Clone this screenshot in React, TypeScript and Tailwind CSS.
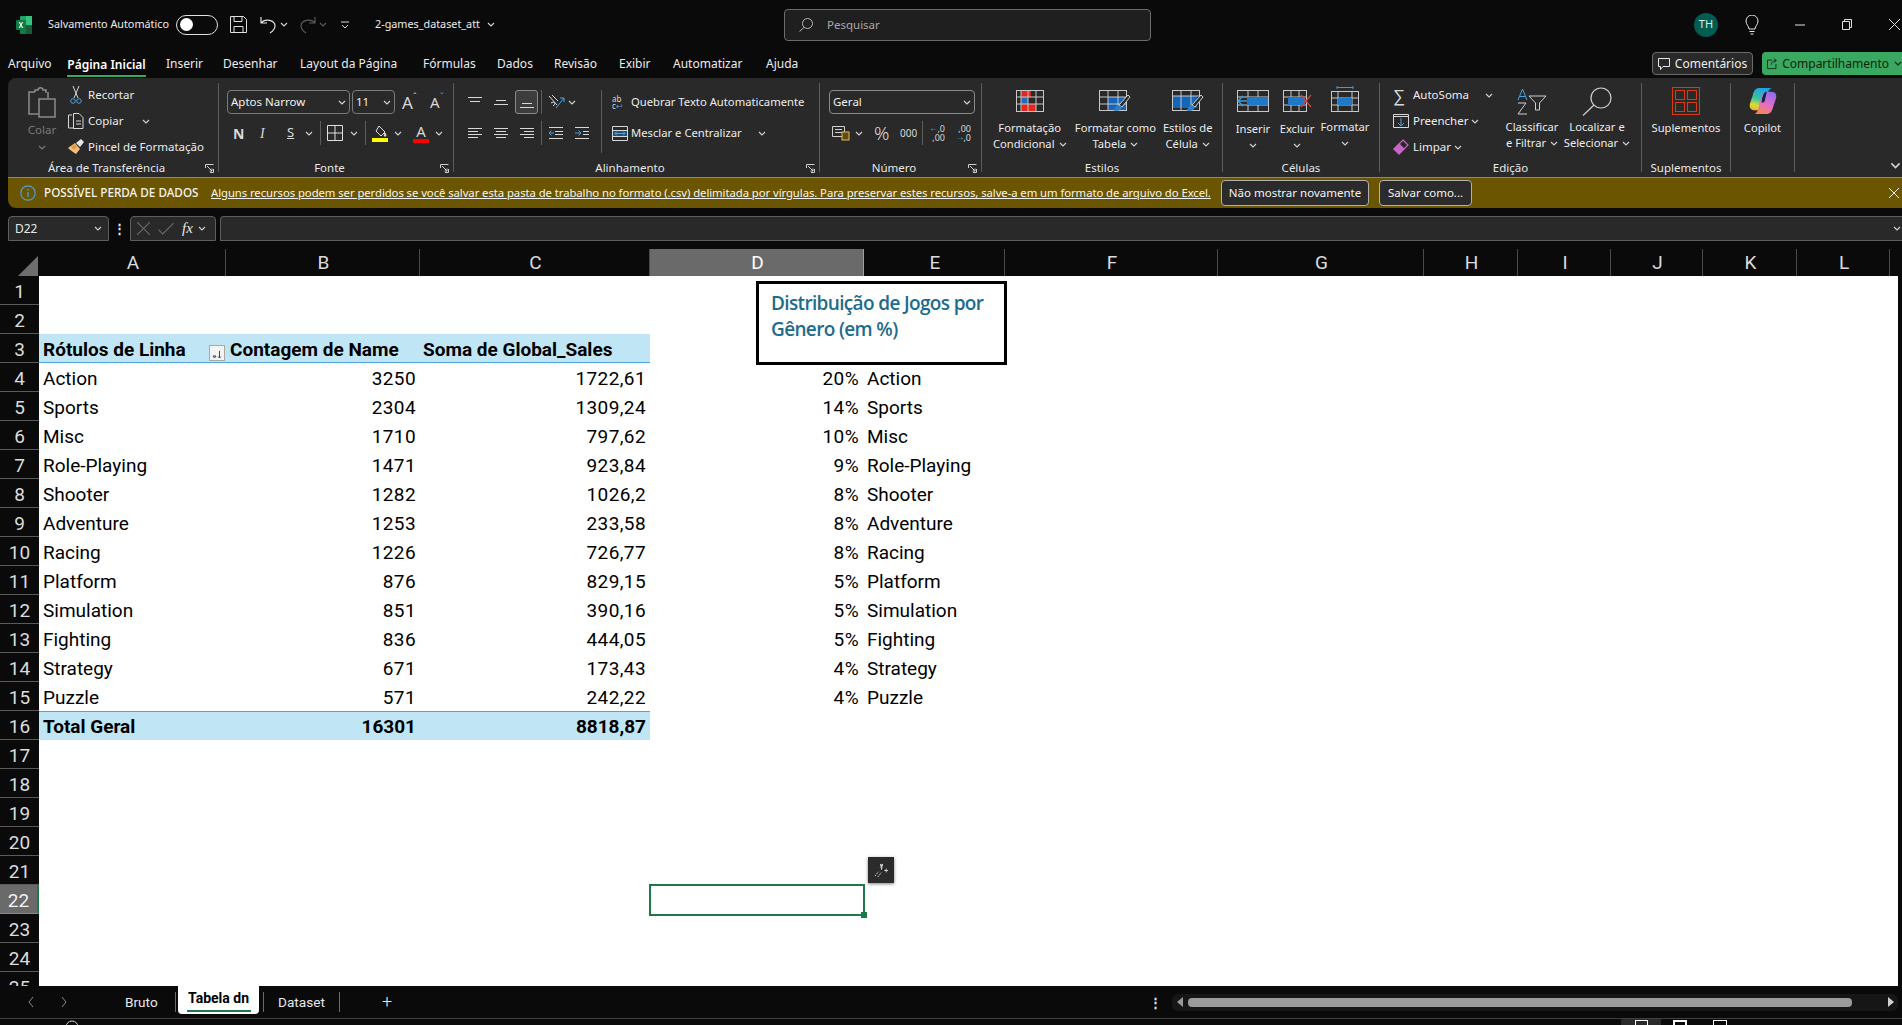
import React from "react";

const Chevron = ({ className = "", color = "#d0d0d0" }: { className?: string; color?: string }) => (
  <svg viewBox="0 0 8 5" className={`w-[8px] h-[5px] shrink-0 ${className}`} fill="none" stroke={color} strokeWidth="1.2">
    <path d="M1 1l3 3 3-3" />
  </svg>
);

const GridBase = ({ w, h, cols, rows }: { w: number; h: number; cols: number[]; rows: number[] }) => (
  <>
    <rect x=".5" y=".5" width={w - 1} height={h - 1} fill="none" stroke="#c8c8c8" />
    {cols.map((c) => (
      <path key={`c${c}`} d={`M${c} 0V${h}`} stroke="#c8c8c8" />
    ))}
    {rows.map((r) => (
      <path key={`r${r}`} d={`M0 ${r}H${w}`} stroke="#c8c8c8" />
    ))}
  </>
);

const Brush = ({ x, y }: { x: number; y: number }) => (
  <g transform={`translate(${x} ${y})`}>
    <path d="M15 0l2 2-8 10-3-2z" fill="#2a2a2a" stroke="#cfcfcf" />
    <path d="M5 10c-3 1-2 4-5 5 3 2 8 1 9-3z" fill="#2f7fc4" />
  </g>
);

const ExcelLogo = () => (
  <svg viewBox="0 0 16 18" className="w-[16px] h-[18px]">
    <rect x="4" y="0" width="12" height="18" rx="1" fill="#21a366" />
    <rect x="10" y="0" width="6" height="9" fill="#33c481" />
    <rect x="4" y="9" width="6" height="9" fill="#107c41" />
    <rect x="10" y="9" width="6" height="9" fill="#185c37" />
    <rect x="0" y="4" width="10" height="10" rx="1" fill="#107c41" />
    <path d="M2.6 6l1.7 3-1.8 3h1.3l1.1-2.1L6 12h1.4L5.500 9l1.800-3H6L5 8 3.900 6z" fill="#fff" />
  </svg>
);

const Copilot = () => (
  <svg viewBox="0 0 30 30" className="w-[30px] h-[28px]">
    <defs>
      <linearGradient id="cpa" x1="0.6" y1="0" x2="0.3" y2="1">
        <stop offset="0" stopColor="#1fa2e8" />
        <stop offset="0.5" stopColor="#36c2a0" />
        <stop offset="0.8" stopColor="#d8dc3a" />
        <stop offset="1" stopColor="#f5b52c" />
      </linearGradient>
      <linearGradient id="cpb" x1="0.7" y1="0" x2="0.3" y2="1">
        <stop offset="0" stopColor="#8f6cf0" />
        <stop offset="0.55" stopColor="#e66cc4" />
        <stop offset="1" stopColor="#f58a4a" />
      </linearGradient>
    </defs>
    <path d="M10 1C6 2 5 5 4 9L1 18c-1 4 1 7 5 7h5c3 0 5-2 6-6l3-12c1-3 2-6 5-6z" fill="url(#cpa)" />
    <path d="M20 29c4-1 5-4 6-8l3-9c1-4-1-7-5-7h-5c-3 0-5 2-6 6l-3 12c-1 3-2 6-5 6z" fill="url(#cpb)" />
    <path d="M14 12l2-5c.6-1.500 2-2 3-2l-1.500 7-1 4-3 1z" fill="#15233f" />
  </svg>
);

interface GroupProps {
  width: string;
  label?: string;
  launcher?: boolean;
  children: React.ReactNode;
}

const Launcher = () => (
  <svg viewBox="0 0 9 9" className="w-[9px] h-[9px] mr-[4px] shrink-0" fill="none" stroke="#cfcfcf">
    <path d="M8.500 5v3.500H5M.5 4V.5h8M2 2l5 5M7 4.500V7H4.500" />
  </svg>
);

const Group = ({ width, label, launcher, children }: GroupProps) => (
  <div className={`${width} h-[89px] shrink-0 border-r border-[#5c5c5c] flex flex-col`}>
    <div className="h-[78px] shrink-0">{children}</div>
    <div className="h-[14px] shrink-0 flex items-center text-[11.5px] text-[#e8e8e8]">
      <div className="flex-1 text-center whitespace-nowrap">{label}</div>
      {launcher && <Launcher />}
    </div>
  </div>
);

const BigLabel = ({ lines, chev }: { lines: string[]; chev?: boolean }) => (
  <div className="text-[11.2px] leading-[16px] text-center text-[#ececec] whitespace-nowrap">
    <div>{lines[0]}</div>
    <div className="flex items-center justify-center gap-[4px] h-[16px]">
      {lines[1] && <span>{lines[1]}</span>}
      {chev && <Chevron />}
    </div>
  </div>
);

const Lines = ({ ys }: { ys: number[][] }) => (
  <svg viewBox="0 0 14 14" className="w-[14px] h-[14px]" stroke="#d8d8d8" fill="none">
    {ys.map((l, i) => (
      <path key={i} d={`M${l[1]} ${l[0]}.5H${l[2]}`} />
    ))}
  </svg>
);

const Clipboard = () => (
  <svg viewBox="0 0 28 32" className="w-[28px] h-[32px]" fill="none" stroke="#8c8c8c" strokeWidth="1.500">
    <path d="M7 6H1v22h9" />
    <path d="M7 6V4h3c0-3 5-3 5 0h3v2h-1" />
    <path d="M20 6v6" />
    <rect x="11" y="13" width="16" height="18" fill="#2a2a2a" />
  </svg>
);

const Scissors = () => (
  <svg viewBox="0 0 12 18" className="w-[12px] h-[18px]" fill="none">
    <path d="M3 0l5 12M9 0L4 12" stroke="#d8d8d8" />
    <circle cx="3" cy="15" r="2.300" stroke="#4aa3e0" />
    <circle cx="9" cy="15" r="2.300" stroke="#4aa3e0" />
  </svg>
);

const CopyIcon = () => (
  <svg viewBox="0 0 16 18" className="w-[16px] h-[18px]" fill="none" stroke="#d8d8d8">
    <path d="M4 3H.5v13H6" />
    <path d="M5.500 1.500H11l4 4v11H5.500z" />
    <path d="M8 9h5M8 12h5" />
  </svg>
);

const PainterIcon = () => (
  <svg viewBox="0 0 16 16" className="w-[16px] h-[16px]">
    <path d="M0 9l7-5 5 6-4 5C5 13 2 11 0 9z" fill="#f2c084" />
    <path d="M3 8l4-3 2 3-3 3z" fill="#e59a3b" />
    <path d="M8 4l5-4 3 3-4 5z" fill="#e8e8e8" />
  </svg>
);

const rowBtn = "flex items-center h-[26px] text-[11.5px] text-[#ececec] whitespace-nowrap";

const Ribbon = () => (
  <div className="h-[99px] ml-[8px] bg-[#292929] rounded-tl-[8px] pt-[5px] flex">
    <Group width="w-[211px]" label="Área de Transferência" launcher>
      <div className="flex">
        <div className="w-[60px] pl-[14px] pr-[6px] pt-[3px] flex flex-col items-center">
          <Clipboard />
          <div className="mt-[3px] text-[11.5px] text-[#7a7a7a]">Colar</div>
          <Chevron className="mt-[7px]" color="#7a7a7a" />
        </div>
        <div className="-mt-[1px]">
          <div className={rowBtn}>
            <div className="w-[20px] flex justify-center pr-[4px]"><Scissors /></div>
            Recortar
          </div>
          <div className={rowBtn}>
            <div className="w-[20px]"><CopyIcon /></div>
            Copiar
            <Chevron className="ml-[19px]" />
          </div>
          <div className={rowBtn}>
            <div className="w-[20px]"><PainterIcon /></div>
            Pincel de Formatação
          </div>
        </div>
      </div>
    </Group>

    <Group width="w-[235px]" label="Fonte" launcher>
      <div className="pt-[7px]">
        <div className="flex items-center h-[24px]">
          <div className="ml-[8px] w-[123px] h-[24px] rounded-[4px] border border-[#7a7a7a] flex items-center justify-between pl-[3px] pr-[3px] text-[11.5px] text-[#f0f0f0]">
            Aptos Narrow <Chevron />
          </div>
          <div className="ml-[2px] w-[43px] h-[24px] rounded-[4px] border border-[#7a7a7a] flex items-center justify-between pl-[3px] pr-[3px] text-[11.5px] text-[#f0f0f0]">
            11 <Chevron />
          </div>
          <div className="ml-[7px] w-[16px] text-[17px] leading-none text-[#d8d8d8] relative">
            A<span className="absolute -top-[2px] left-[11px] text-[9px] text-[#c0c0c0]">ˆ</span>
          </div>
          <div className="ml-[12px] w-[15px] text-[15px] leading-none text-[#d8d8d8] relative">
            A<span className="absolute -top-[3px] left-[10px] text-[9px] text-[#5aa6e0]">ˇ</span>
          </div>
        </div>
        <div className="flex items-center h-[24px] mt-[7px] text-[#d8d8d8]">
          <div className="ml-[14px] w-[11px] text-[14px] font-bold">N</div>
          <div className="ml-[16px] w-[10px] text-[14px] italic font-['Liberation_Serif',serif]">I</div>
          <div className="ml-[17px] w-[10px] text-[13px] underline">S</div>
          <Chevron className="ml-[8px]" />
          <div className="ml-[7px] w-px h-[24px] bg-[#5c5c5c]" />
          <svg viewBox="0 0 16 16" className="ml-[6px] w-[16px] h-[16px]" fill="none" stroke="#e0e0e0">
            <path d="M.5.5h15v15H.5zM8 0v16M0 8h16" />
          </svg>
          <Chevron className="ml-[7px]" />
          <div className="ml-[7px] w-px h-[24px] bg-[#5c5c5c]" />
          <div className="ml-[6px] w-[16px] flex flex-col items-center">
            <svg viewBox="0 0 14 13" className="w-[14px] h-[13px]" fill="none" stroke="#e0e0e0">
              <path d="M6 1l6 6-4 4-5-5z" />
              <path d="M12 8c1 1.500 1.500 3 0 3.500-1-.5-1-2 0-3.500z" fill="#f4d03f" />
            </svg>
            <div className="w-[16px] h-[4px] bg-[#ffff00]" />
          </div>
          <Chevron className="ml-[6px]" />
          <div className="ml-[11px] w-[16px] flex flex-col items-center">
            <div className="text-[15px] leading-[14px]">A</div>
            <div className="w-[16px] h-[4px] bg-[#ff0000] mt-[1px]" />
          </div>
          <Chevron className="ml-[6px]" />
        </div>
      </div>
    </Group>

    <Group width="w-[366px]" label="Alinhamento" launcher>
      <div className="pt-[7px] flex">
        <div>
          <div className="flex items-center h-[24px]">
            <div className="ml-[14px]"><Lines ys={[[2, 0, 14], [6, 2, 12]]} /></div>
            <div className="ml-[12px]"><Lines ys={[[5, 2, 12], [9, 0, 14]]} /></div>
            <div className="ml-[7px] w-[23px] h-[24px] rounded-[3px] border border-[#8a8a8a] bg-[#3d3d3d] flex items-center justify-center">
              <Lines ys={[[8, 2, 12], [12, 0, 14]]} />
            </div>
            <div className="ml-[3px] w-px h-[24px] bg-[#5c5c5c]" />
            <svg viewBox="0 0 17 16" className="ml-[6px] w-[17px] h-[16px]" fill="none" stroke="#d8d8d8">
              <path d="M1 2l8 9M4 1l6 6M3 9c3-2 6 0 2 3" />
              <path d="M8 14L16 4M12 4h4v4" stroke="#4aa3e0" />
            </svg>
            <Chevron className="ml-[3px]" />
          </div>
          <div className="flex items-center h-[24px] mt-[7px]">
            <div className="ml-[14px]"><Lines ys={[[2, 0, 14], [5, 0, 10], [8, 0, 14], [11, 0, 10]]} /></div>
            <div className="ml-[12px]"><Lines ys={[[2, 0, 14], [5, 2, 12], [8, 0, 14], [11, 2, 12]]} /></div>
            <div className="ml-[12px]"><Lines ys={[[2, 0, 14], [5, 4, 14], [8, 0, 14], [11, 4, 14]]} /></div>
            <div className="ml-[7px] w-px h-[24px] bg-[#5c5c5c]" />
            <svg viewBox="0 0 14 14" className="ml-[7px] w-[14px] h-[14px]" fill="none" stroke="#d8d8d8">
              <path d="M0 1.500h14M6 5.500h8M6 8.500h8M0 12.500h14" />
              <path d="M5 7H0M2.500 4.500L0 7l2.500 2.500" stroke="#4aa3e0" />
            </svg>
            <svg viewBox="0 0 14 14" className="ml-[12px] w-[14px] h-[14px]" fill="none" stroke="#d8d8d8">
              <path d="M0 1.500h14M8 5.500h6M8 8.500h6M0 12.500h14" />
              <path d="M0 7h6M3.500 4.500L6 7 3.500 9.500" stroke="#4aa3e0" />
            </svg>
          </div>
        </div>
        <div className="ml-[12px] w-px h-[63px] bg-[#5c5c5c]" />
        <div className="ml-[10px] text-[11.25px] text-[#ececec] whitespace-nowrap">
          <div className="flex items-center h-[24px]">
            <div className="w-[19px] text-[8px] leading-[7px] text-[#d8d8d8]">
              ab<br />c<span className="text-[#4aa3e0]">↩</span>
            </div>
            Quebrar Texto Automaticamente
          </div>
          <div className="flex items-center h-[24px] mt-[7px]">
            <svg viewBox="0 0 16 15" className="w-[16px] h-[15px] mr-[3px]" fill="none" stroke="#d8d8d8">
              <path d="M.5.5h15v14H.5zM0 4.500h16M0 10.500h16" />
              <rect x="1" y="5" width="14" height="5" fill="#1c4f7a" stroke="none" />
              <path d="M3 7.500h10M5 5.500l-2 2 2 2M11 5.500l2 2-2 2" stroke="#4aa3e0" />
            </svg>
            Mesclar e Centralizar
            <Chevron className="ml-[16px]" />
          </div>
        </div>
      </div>
    </Group>

    <Group width="w-[162px]" label="Número" launcher>
      <div className="pt-[7px]">
        <div className="ml-[9px] w-[146px] h-[24px] rounded-[4px] border border-[#8a8a8a] flex items-center justify-between pl-[3px] pr-[3px] text-[11.5px] text-[#f0f0f0]">
          Geral <Chevron />
        </div>
        <div className="flex items-center h-[24px] mt-[7px] text-[#d8d8d8]">
          <svg viewBox="0 0 18 16" className="ml-[12px] w-[18px] h-[16px]" fill="none" stroke="#d0d0d0">
            <path d="M.5 1.500h12v10H.5zM3 4.500h7M3 7.500h7" />
            <rect x="10" y="7" width="7" height="8" fill="#5a4a1e" stroke="#e8b84a" />
          </svg>
          <Chevron className="ml-[5px]" />
          <div className="ml-[11px] text-[19px] leading-none font-light w-[17px]">%</div>
          <div className="ml-[9px] text-[10px] w-[17px]">000</div>
          <div className="ml-[5px] w-px h-[24px] bg-[#5c5c5c]" />
          <div className="ml-[6px] w-[16px] text-[9px] leading-[9px] text-right relative">
            ,0<br />,00
            <span className="absolute left-0 -top-[1px] text-[10px] text-[#4aa3e0]">←</span>
          </div>
          <div className="ml-[10px] w-[16px] text-[9px] leading-[9px] text-right relative">
            ,00<br />,0
            <span className="absolute left-0 top-[8px] text-[10px] text-[#4aa3e0]">→</span>
          </div>
        </div>
      </div>
    </Group>

    <Group width="w-[241px]" label="Estilos">
      <div className="flex pt-[7px]">
        <div className="w-[96px] flex flex-col items-center">
          <svg viewBox="0 0 28 22" className="w-[28px] h-[22px]">
            <rect x="5" y="0" width="10" height="7" fill="#e3271f" />
            <rect x="5" y="7" width="7" height="7" fill="#1f6fc0" />
            <rect x="5" y="14" width="15" height="8" fill="#e3271f" />
            <GridBase w={28} h={22} cols={[5, 12, 20]} rows={[7, 14]} />
          </svg>
          <div className="mt-[8px]"><BigLabel lines={["Formatação", "Condicional"]} chev /></div>
        </div>
        <div className="w-[76px] flex flex-col items-center">
          <svg viewBox="0 0 32 27" className="w-[32px] h-[27px] -mb-[5px]">
            <rect x="9" y="7" width="19" height="14" fill="#1565b8" />
            <GridBase w={28} h={21} cols={[9, 19]} rows={[7, 14]} />
            <Brush x={14} y={5} />
          </svg>
          <div className="mt-[8px]"><BigLabel lines={["Formatar como", "Tabela"]} chev /></div>
        </div>
        <div className="w-[69px] flex flex-col items-center">
          <svg viewBox="0 0 32 27" className="w-[32px] h-[27px] -mb-[5px]">
            <rect x="1" y="6" width="24" height="12" fill="#1565b8" />
            <GridBase w={28} h={21} cols={[9, 19]} rows={[6]} />
            <Brush x={14} y={5} />
          </svg>
          <div className="mt-[8px]"><BigLabel lines={["Estilos de", "Célula"]} chev /></div>
        </div>
      </div>
    </Group>

    <Group width="w-[157px]" label="Células">
      <div className="flex pt-[3px]">
        <div className="w-[60px] flex flex-col items-center">
          <svg viewBox="0 0 32 22" className="mt-[4px] w-[32px] h-[22px]">
            <GridBase w={32} h={22} cols={[11, 21]} rows={[7, 15]} />
            <rect x="10" y="7" width="21" height="8" fill="#1f78c8" />
            <path d="M10 11H1M6 6l-5 5 5 5" stroke="#3a9be0" strokeWidth="1.500" fill="none" />
          </svg>
          <div className="mt-[9px]"><BigLabel lines={["Inserir", ""]} chev /></div>
        </div>
        <div className="w-[28px] flex flex-col items-center">
          <svg viewBox="0 0 29 22" className="mt-[4px] w-[29px] h-[22px] shrink-0">
            <GridBase w={24} h={22} cols={[8, 16]} rows={[7, 15]} />
            <rect x="5" y="7" width="17" height="8" fill="#1f78c8" />
            <path d="M18 5l10 12M28 5L18 17" stroke="#d9413a" strokeWidth="1.200" />
          </svg>
          <div className="mt-[9px]"><BigLabel lines={["Excluir", ""]} chev /></div>
        </div>
        <div className="w-[68px] flex flex-col items-center">
          <svg viewBox="0 0 28 26" className="w-[28px] h-[26px]">
            <path d="M6 1.500h16M6 0v3M22 0v3" stroke="#3a9be0" />
            <g transform="translate(0 5)">
              <GridBase w={28} h={21} cols={[7, 21]} rows={[7, 14]} />
              <rect x="7" y="7" width="14" height="7" fill="#1f78c8" />
            </g>
          </svg>
          <div className="mt-[7px]"><BigLabel lines={["Formatar", ""]} chev /></div>
        </div>
      </div>
    </Group>

    <Group width="w-[262px]" label="Edição">
      <div className="flex">
        <div className="-mt-[1px] pl-[13px] w-[122px]">
          <div className={rowBtn}>
            <div className="w-[20px] text-[17px] leading-none font-light text-[#d8d8d8]">∑</div>
            AutoSoma
            <Chevron className="ml-[16px]" />
          </div>
          <div className={rowBtn}>
            <svg viewBox="0 0 16 16" className="w-[16px] h-[16px] mr-[4px]" fill="none" stroke="#d8d8d8">
              <path d="M.5 1.500h15v13H.5zM0 3.500h16" />
              <path d="M8 5v8M5 10l3 3 3-3" stroke="#4aa3e0" />
            </svg>
            Preencher
            <Chevron className="ml-[3px]" />
          </div>
          <div className={rowBtn}>
            <svg viewBox="0 0 16 16" className="w-[16px] h-[16px] mr-[4px]" fill="none" stroke="#c765c9" strokeWidth="1.200">
              <path d="M10 1l5 5-9 9-5-5z" />
              <path d="M6 5l5 5-5 5-5-5z" fill="#c765c9" />
            </svg>
            Limpar
            <Chevron className="ml-[3px]" />
          </div>
        </div>
        <div className="w-[60px] flex flex-col items-center pt-[5px]">
          <svg viewBox="0 0 30 27" className="w-[30px] h-[27px]" fill="none">
            <path d="M1 12L5.500 1 10 12M2.500 8.500h6" stroke="#4aa3e0" />
            <path d="M1 15h8L1 26h9" stroke="#d0d0d0" />
            <path d="M12 8h17l-6.500 7v7h-4v-7z" stroke="#d0d0d0" />
          </svg>
          <div className="mt-[4px]"><BigLabel lines={["Classificar", "e Filtrar"]} chev /></div>
        </div>
        <div className="w-[70px] flex flex-col items-center pt-[4px]">
          <svg viewBox="0 0 30 29" className="w-[30px] h-[29px]" fill="none" stroke="#d0d0d0" strokeWidth="1.200">
            <circle cx="19" cy="11" r="10" />
            <path d="M12 18L1 28.500" />
          </svg>
          <div className="mt-[3px]"><BigLabel lines={["Localizar e", "Selecionar"]} chev /></div>
        </div>
      </div>
    </Group>

    <Group width="w-[89px]" label="Suplementos">
      <div className="flex flex-col items-center pt-[4px]">
        <svg viewBox="0 0 28 28" className="w-[28px] h-[28px]" fill="none" stroke="#d83b12" strokeWidth="1.100">
          <path d="M.5.5h27v27H.5z" />
          <path d="M3.500 3.500h9v9h-9zM15.500 3.500h9v9h-9zM3.500 15.500h9v9h-9zM15.500 15.500h9v9h-9z" />
        </svg>
        <div className="mt-[5px]"><BigLabel lines={["Suplementos"]} /></div>
      </div>
    </Group>

    <Group width="w-[64px]">
      <div className="flex flex-col items-center pt-[4px]">
        <Copilot />
        <div className="mt-[5px]"><BigLabel lines={["Copilot"]} /></div>
      </div>
    </Group>

    <div className="flex-1 flex items-end justify-end pr-[1px] pb-[8px]">
      <Chevron className="w-[11px] h-[7px]" />
    </div>
  </div>
);

const Notice = () => (
  <div className="h-[31px] ml-[8px] bg-[#6b5500] border-t border-[#8a8a7a] rounded-bl-[8px] flex items-center text-[11.5px] text-[#f4f4f4] whitespace-nowrap">
    <svg viewBox="0 0 16 16" className="ml-[12px] w-[16px] h-[16px]" fill="none" stroke="#4aa3e0" strokeWidth="1.200">
      <circle cx="8" cy="8" r="7.200" />
      <path d="M8 7v5M8 4v1.500" />
    </svg>
    <span className="ml-[8px] w-[167px] font-medium text-[11.7px]">POSSÍVEL PERDA DE DADOS</span>
    <span className="w-[1010px] underline text-[11.35px] tracking-[-0.08px]">
      Alguns recursos podem ser perdidos se você salvar esta pasta de trabalho no formato (.csv) delimitada por vírgulas. Para preservar estes recursos, salve-a em um formato de arquivo do Excel.
    </span>
    <button className="w-[148px] h-[26px] rounded-[4px] border border-[#b0b0b0] bg-[#2b2b2b] text-[11.5px]">Não mostrar novamente</button>
    <button className="ml-[10px] w-[93px] h-[26px] rounded-[4px] border border-[#b0b0b0] bg-[#2b2b2b] text-[11.5px]">Salvar como...</button>
    <svg viewBox="0 0 10 10" className="ml-auto mr-[3px] w-[10px] h-[10px]" stroke="#f0f0f0" fill="none">
      <path d="M0 0l10 10M10 0L0 10" />
    </svg>
  </div>
);

const FormulaBar = () => (
  <div className="h-[25px] mt-[8px] ml-[8px] flex items-stretch text-[#e8e8e8]">
    <div className="w-[101px] rounded-t-[4px] border border-[#5e5e5e] bg-[#292929] flex items-center justify-between pl-[6px] pr-[6px] text-[12px]">
      D22 <Chevron />
    </div>
    <div className="w-[21px] flex items-center justify-center text-[13px] font-bold leading-none">⋮</div>
    <div className="w-[86px] rounded-t-[4px] border border-[#5e5e5e] bg-[#292929] flex items-center pl-[6px] gap-[8px]">
      <svg viewBox="0 0 12 12" className="w-[13px] h-[13px]" stroke="#6a6a6a" fill="none"><path d="M0 0l12 12M12 0L0 12" /></svg>
      <svg viewBox="0 0 14 12" className="w-[16px] h-[13px]" stroke="#6a6a6a" fill="none"><path d="M0 7l4 4L14 1" /></svg>
      <span className="text-[15px] italic font-['Liberation_Serif',serif]">fx</span>
      <Chevron className="-ml-[3px]" />
    </div>
    <div className="ml-[4px] flex-1 rounded-tl-[4px] border border-[#5e5e5e] border-r-0 bg-[#292929] flex items-center justify-end pr-[1px]">
      <Chevron />
    </div>
  </div>
);

const sheetGrid = "grid grid-cols-[39px_187px_194px_230px_214px_141px_213px_206px_94px_93px_92px_94px_93px_8px]";
const columns = ["A", "B", "C", "D", "E", "F", "G", "H", "I", "J", "K", "L"];

const pivot = [
  ["Action", "3250", "1722,61", "20%"],
  ["Sports", "2304", "1309,24", "14%"],
  ["Misc", "1710", "797,62", "10%"],
  ["Role-Playing", "1471", "923,84", "9%"],
  ["Shooter", "1282", "1026,2", "8%"],
  ["Adventure", "1253", "233,58", "8%"],
  ["Racing", "1226", "726,77", "8%"],
  ["Platform", "876", "829,15", "5%"],
  ["Simulation", "851", "390,16", "5%"],
  ["Fighting", "836", "444,05", "5%"],
  ["Strategy", "671", "173,43", "4%"],
  ["Puzzle", "571", "242,22", "4%"],
];

const RowHead = ({ n }: { n: number }) => (
  <div
    className={
      n === 22
        ? "h-[29px] bg-[#6a6a6a] border-r-2 border-[#1d7a48] border-b border-b-[#8a8a8a] text-center text-[#f0f0f0] leading-[32px]"
        : "h-[29px] bg-[#0a0a0a] border-b border-[#5a5a5a] text-center text-[#dcdcdc] leading-[32px]"
    }
  >
    {n}
  </div>
);

const Spare = () => <div className="col-span-10 h-[29px] bg-white" />;

const Row = ({ n }: { n: number }) => {
  const item = n >= 4 && n <= 15 ? pivot[n - 4] : null;
  if (item) {
    return (
      <div className={sheetGrid}>
        <RowHead n={n} />
        <div className="h-[29px] bg-white pl-[4px] text-black leading-[31px]">{item[0]}</div>
        <div className="h-[29px] bg-white pr-[4px] text-right text-black tracking-[0.4px] leading-[31px]">{item[1]}</div>
        <div className="h-[29px] bg-white pr-[4px] text-right text-black tracking-[0.4px] leading-[31px]">{item[2]}</div>
        <div className="h-[29px] bg-white pr-[5px] text-right text-black tracking-[0.4px] leading-[31px]">{item[3]}</div>
        <div className="h-[29px] bg-white pl-[3px] text-black leading-[31px]">{item[0]}</div>
        <div className="col-span-8 h-[29px] bg-white" />
      </div>
    );
  }
  if (n === 3) {
    return (
      <div className={sheetGrid}>
        <RowHead n={n} />
        <div className="h-[29px] bg-[#c0e6f5] border-b border-[#4da6d8] pl-[4px] text-black font-bold leading-[32px] flex justify-between">
          Rótulos de Linha
          <div className="mt-[11px] mr-[1px] w-[16px] h-[16px] bg-[#f4f4f4] border border-[#a8a8a8] flex items-end justify-center">
            <svg viewBox="0 0 10 8" className="w-[10px] h-[8px] mb-[1px]" fill="none" stroke="#444">
              <path d="M1 5h3L2.500 7zM7.500 0v7M6 5.500l1.500 1.500L9 5.500" />
            </svg>
          </div>
        </div>
        <div className="h-[29px] bg-[#c0e6f5] border-b border-[#4da6d8] pl-[4px] text-black font-bold leading-[32px] whitespace-nowrap">Contagem de Name</div>
        <div className="h-[29px] bg-[#c0e6f5] border-b border-[#4da6d8] pl-[3px] text-black font-bold leading-[32px] whitespace-nowrap">Soma de Global_Sales</div>
        <Spare />
      </div>
    );
  }
  if (n === 16) {
    return (
      <div className={sheetGrid}>
        <RowHead n={n} />
        <div className="h-[29px] bg-[#c0e6f5] border-t border-[#4da6d8] pl-[4px] text-black font-bold leading-[30px]">Total Geral</div>
        <div className="h-[29px] bg-[#c0e6f5] border-t border-[#4da6d8] pr-[4px] text-right text-black font-bold leading-[30px]">16301</div>
        <div className="h-[29px] bg-[#c0e6f5] border-t border-[#4da6d8] pr-[4px] text-right text-black font-bold leading-[30px]">8818,87</div>
        <Spare />
      </div>
    );
  }
  return (
    <div className={sheetGrid}>
      <RowHead n={n} />
      <div className="col-span-3 h-[29px] bg-white" />
      <Spare />
    </div>
  );
};

const Sheet = () => (
  <div className="h-[737px] mt-[8px] relative overflow-hidden font-['Roboto',sans-serif] text-[19px]">
    <div className={`${sheetGrid} h-[27px]`}>
      <div className="border-b border-[#7a7a7a] flex items-end justify-end pr-[1px] pb-[1px]">
        <svg viewBox="0 0 20 20" className="w-[20px] h-[20px]"><path d="M20 0v20H0z" fill="#6e6e6e" /></svg>
      </div>
      {columns.map((c) => (
        <div
          key={c}
          className={
            c === "D"
              ? "bg-[#6a6a6a] border-b-2 border-[#1d7a48] border-r border-r-[#a0a0a0] pl-[2px] text-center text-white leading-[27px]"
              : "border-b border-[#7a7a7a] border-r border-r-[#4a4a4a] pl-[2px] text-center text-[#dcdcdc] leading-[27px]"
          }
        >
          {c}
        </div>
      ))}
      <div className="border-b border-[#7a7a7a]" />
    </div>
    {Array.from({ length: 25 }, (_, i) => (
      <Row key={i} n={i + 1} />
    ))}

    <div className="absolute left-[756px] top-[32px] w-[251px] h-[84px] bg-white border-[3px] border-black pl-[12px] pt-[6px] text-[19px] leading-[26px] font-semibold text-[#1f6b8c] font-['Open_Sans',sans-serif] tracking-[-0.65px]">
      Distribuição de Jogos por
      <br />
      Gênero (em %)
    </div>

    <div className="absolute left-[649px] top-[635px] w-[216px] h-[32px] border-2 border-[#1d7a48]" />
    <div className="absolute left-[861px] top-[663px] w-[6px] h-[6px] bg-[#1d7a48]" />
    <div className="absolute left-[868px] top-[608px] w-[26px] h-[26px] bg-[#2b2b2b] shadow-[0_1px_3px_rgba(0,0,0,0.5)] flex items-center justify-center">
      <svg viewBox="0 0 16 16" className="w-[15px] h-[15px]" fill="#d8d8d8" stroke="#d8d8d8">
        <path d="M7 1l1 3 1-3-1 6zM11 8h4M13 6v4" fill="none" />
        <path d="M1 14l4-5M4 15l4-5" fill="none" strokeDasharray="2 1" />
      </svg>
    </div>
  </div>
);

const SheetTabs = () => (
  <div className="h-[32px] flex items-center text-[13.6px] font-['Roboto',sans-serif] text-[#e8e8e8]">
    <svg viewBox="0 0 6 12" className="ml-[28px] w-[6px] h-[12px]" stroke="#8a8a8a" fill="none"><path d="M5 1L1 6l4 5" /></svg>
    <svg viewBox="0 0 6 12" className="ml-[27px] w-[6px] h-[12px]" stroke="#8a8a8a" fill="none"><path d="M1 1l4 5-4 5" /></svg>
    <span className="ml-[58px] w-[50px]">Bruto</span>
    <div className="w-px h-[20px] bg-[#6a6a6a]" />
    <div className="ml-[2px] -mt-[4px] w-[81px] h-[28px] bg-white rounded-b-[4px] text-black font-bold text-[14px] text-center leading-[24px] flex flex-col items-center">
      Tabela dn
      <div className="w-[64px] h-[2px] bg-[#1d7a48]" />
    </div>
    <div className="ml-[4px] w-px h-[20px] bg-[#6a6a6a]" />
    <span className="ml-[14px] w-[61px]">Dataset</span>
    <div className="w-px h-[20px] bg-[#6a6a6a]" />
    <span className="ml-[42px] text-[18px] font-light leading-none">+</span>
    <span className="ml-[757px] text-[13px] font-bold leading-none">⋮</span>
    <div className="ml-[10px] w-[726px] h-[17px] rounded-[6px] bg-[#161616] flex items-center">
      <svg viewBox="0 0 6 10" className="ml-[5px] w-[6px] h-[10px]"><path d="M6 0v10L0 5z" fill="#9a9a9a" /></svg>
      <div className="ml-[5px] w-[664px] h-[9px] rounded-[4px] bg-[#9b9b9b]" />
      <svg viewBox="0 0 6 10" className="ml-auto mr-[4px] w-[6px] h-[10px]"><path d="M0 0v10l6-5z" fill="#d0d0d0" /></svg>
    </div>
  </div>
);

const StatusBar = () => (
  <div className="h-[7px] border-t border-[#3f3f3f] flex overflow-hidden">
    <svg viewBox="0 0 14 14" className="ml-[65px] mt-[1px] w-[14px] h-[14px]" fill="none" stroke="#d0d0d0"><circle cx="7" cy="7" r="6" /></svg>
    <div className="ml-[1542px] w-[40px] h-[6px] bg-[#2a2a2a] flex justify-center">
      <div className="mt-[1px] w-[13px] h-[10px] border border-white" />
    </div>
    <div className="ml-[12px] mt-[1px] w-[14px] h-[10px] border-2 border-white" />
    <div className="ml-[26px] mt-[1px] w-[14px] h-[10px] border border-white" />
  </div>
);

const TitleBar = () => (
  <div className="h-[49px] flex items-center text-[10.8px] text-[#ececec] whitespace-nowrap">
    <div className="ml-[16px] w-[32px]"><ExcelLogo /></div>
    <span className="w-[128px]">Salvamento Automático</span>
    <div className="w-[42px] h-[20px] rounded-full border border-[#e0e0e0] flex items-center pl-[3px]">
      <div className="w-[13px] h-[13px] rounded-full bg-white" />
    </div>
    <svg viewBox="0 0 17 17" className="ml-[12px] w-[17px] h-[17px]" fill="none" stroke="#e0e0e0">
      <path d="M.5.5h13l3 3v13H.5zM4 .5v5h8v-5M4 16.500v-6h9v6" />
    </svg>
    <svg viewBox="0 0 17 18" className="ml-[13px] w-[17px] h-[18px]" fill="none" stroke="#e0e0e0" strokeWidth="1.200">
      <path d="M1 1v6h6M1 7c4-5 14-3 14 3 0 3-2 5-5 7" />
    </svg>
    <Chevron className="ml-[3px]" />
    <svg viewBox="0 0 17 18" className="ml-[11px] w-[17px] h-[18px]" fill="none" stroke="#5a5a5a" strokeWidth="1.200">
      <path d="M16 1v6h-6M16 7C12 2 2 4 2 10c0 3 2 5 5 7" />
    </svg>
    <Chevron className="ml-[3px]" color="#5a5a5a" />
    <svg viewBox="0 0 8 8" className="ml-[14px] w-[8px] h-[8px]" fill="none" stroke="#d8d8d8"><path d="M0 1h8M1 4l3 3 3-3" /></svg>
    <span className="ml-[26px] w-[112px]">2-games_dataset_att</span>
    <Chevron />
    <div className="ml-[289px] w-[367px] h-[32px] rounded-[4px] border border-[#6b6b6b] bg-[#1f1f1f] flex items-center pl-[14px] text-[11.5px] text-[#a8a8a8]">
      <svg viewBox="0 0 14 14" className="w-[14px] h-[14px]" fill="none" stroke="#b8b8b8"><circle cx="8.500" cy="5.500" r="5" /><path d="M5 9.500L.5 13.500" /></svg>
      <span className="ml-[14px]">Pesquisar</span>
    </div>
    <div className="ml-[543px] w-[24px] h-[24px] rounded-full bg-[#035c52] text-[#d8f0ec] text-[11px] flex items-center justify-center">TH</div>
    <svg viewBox="0 0 14 20" className="ml-[27px] w-[14px] h-[20px]" fill="none" stroke="#e8e8e8">
      <path d="M4 14c0-3-3-4-3-8a6 6 0 0112 0c0 4-3 5-3 8zM4.500 16.500h5M5.500 19h3" />
    </svg>
    <svg viewBox="0 0 10 2" className="ml-[36px] w-[10px] h-[2px]" stroke="#e0e0e0"><path d="M0 1h10" /></svg>
    <svg viewBox="0 0 10 11" className="ml-[37px] w-[10px] h-[11px]" fill="none" stroke="#e0e0e0"><path d="M.5 2.500h7v8h-7zM2.500 2.500v-2h7v8h-2" /></svg>
    <svg viewBox="0 0 11 11" className="ml-[37px] w-[11px] h-[11px]" fill="none" stroke="#e0e0e0"><path d="M0 0l11 11M11 0L0 11" /></svg>
  </div>
);

const tabs: [string, string][] = [
  ["Arquivo", "ml-[8px] w-[59px]"],
  ["Inserir", "ml-[20px] w-[57px]"],
  ["Desenhar", "w-[77px]"],
  ["Layout da Página", "w-[123px]"],
  ["Fórmulas", "w-[74px]"],
  ["Dados", "w-[57px]"],
  ["Revisão", "w-[65px]"],
  ["Exibir", "w-[54px]"],
  ["Automatizar", "w-[93px]"],
  ["Ajuda", "w-[40px]"],
];

const TabRow = () => (
  <div className="h-[29px] flex items-center text-[12px] text-[#ececec] whitespace-nowrap">
    <span className={tabs[0][1]}>{tabs[0][0]}</span>
    <span className="w-[79px] h-[24px] leading-[24px] mt-[2px] font-semibold border-b-2 border-[#3aa860] text-center text-white">Página Inicial</span>
    {tabs.slice(1).map(([t, c]) => (
      <span key={t} className={c}>{t}</span>
    ))}
    <div className="ml-[846px] w-[101px] h-[23px] rounded-[4px] border border-[#6b6b6b] bg-[#292929] flex items-center justify-center gap-[5px]">
      <svg viewBox="0 0 12 12" className="w-[12px] h-[12px]" fill="none" stroke="#e8e8e8"><path d="M.5.5h11v8H5L2.500 11.500v-3h-2z" /></svg>
      Comentários
    </div>
    <div className="ml-[9px] w-[140px] h-[23px] rounded-l-[4px] bg-[#3aa860] text-[#10240f] flex items-center pl-[5px] gap-[5px]">
      <svg viewBox="0 0 12 13" className="w-[12px] h-[13px]" fill="none" stroke="#10240f"><path d="M6 2.500H.5v10h10V7M5 8c0-3 2-5 6-5M8 .5L11 3 8 5.500" /></svg>
      Compartilhamento
      <Chevron color="#10240f" />
    </div>
  </div>
);

export default function App() {
  return (
    <div className="w-[1902px] h-[1025px] overflow-hidden bg-[#0a0a0a] font-['Noto_Sans',sans-serif]">
      <TitleBar />
      <TabRow />
      <Ribbon />
      <Notice />
      <FormulaBar />
      <Sheet />
      <SheetTabs />
      <StatusBar />
    </div>
  );
}
